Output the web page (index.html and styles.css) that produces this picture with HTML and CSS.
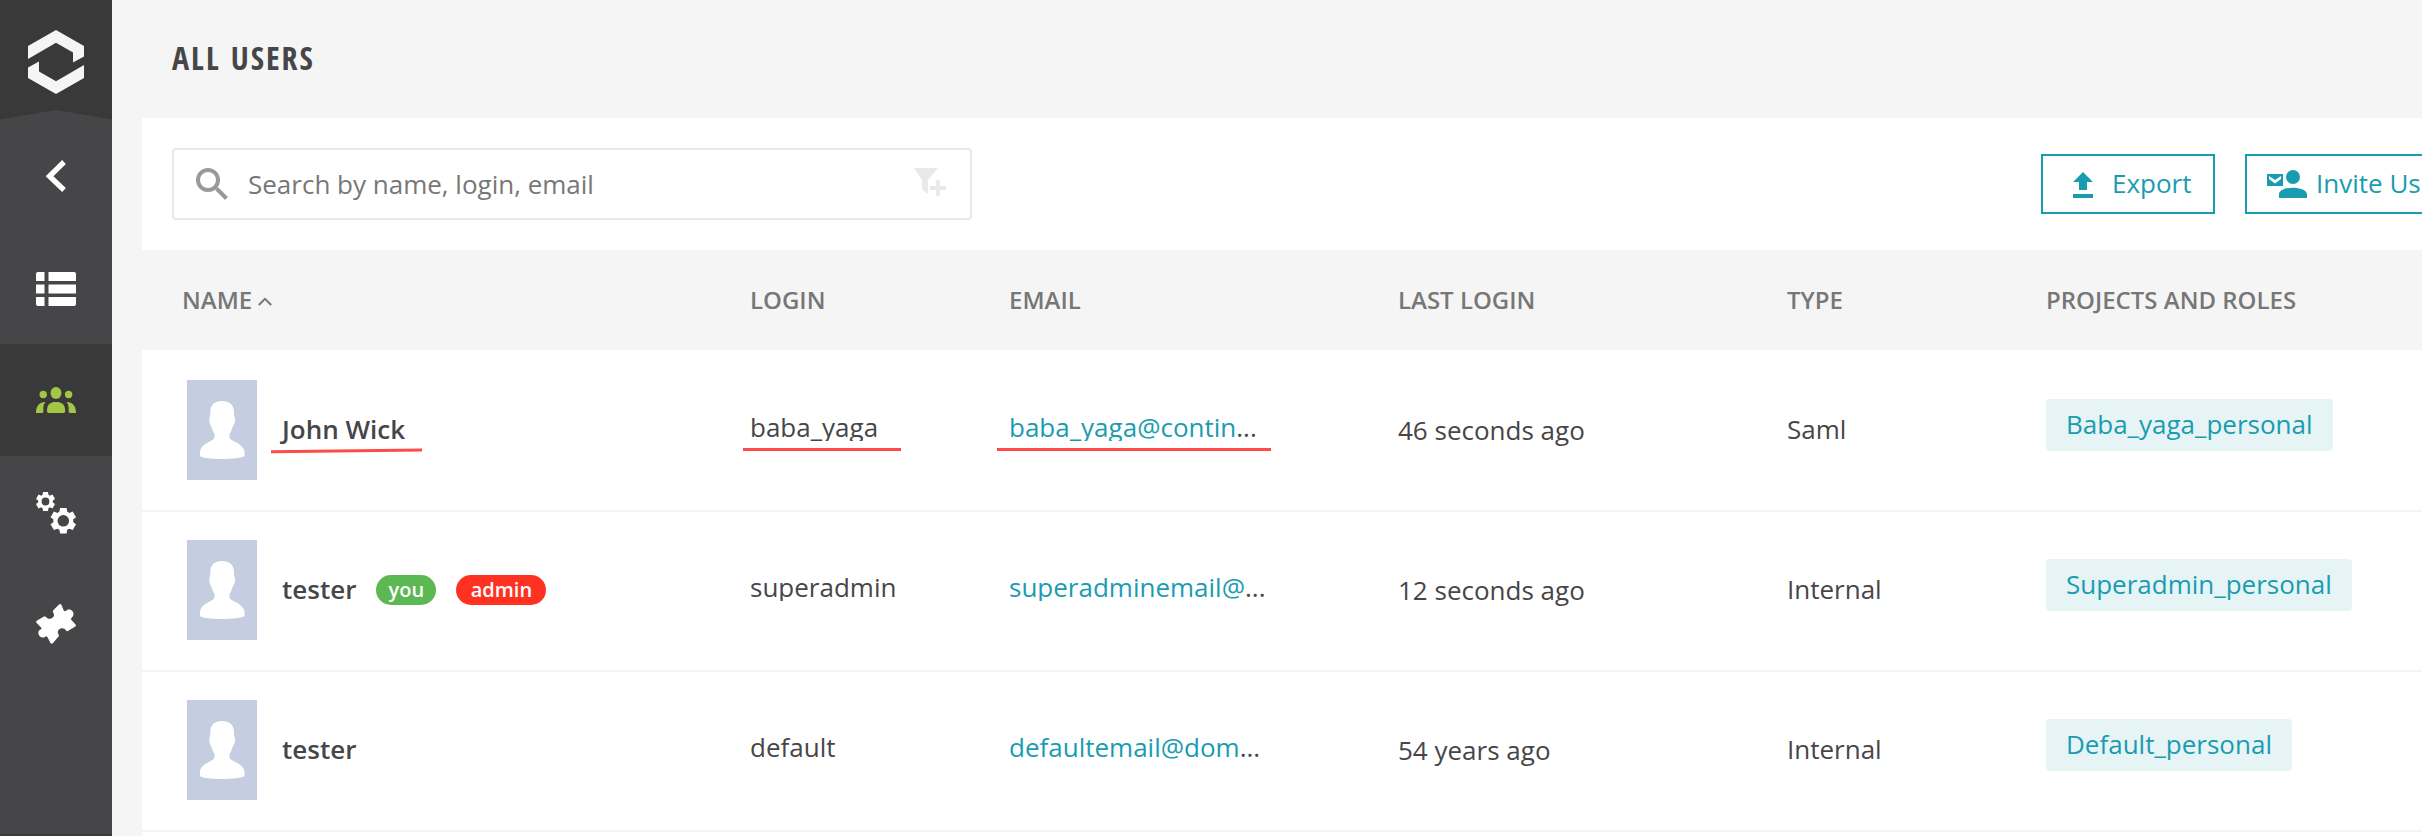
FILE: index.html
```html
<!DOCTYPE html>
<html lang="en">
<head>
<meta charset="utf-8">
<title>All Users</title>
<link rel="stylesheet" href="styles.css">
</head>
<body>
<svg class="defs" width="0" height="0">
  <symbol id="avatar" viewBox="0 0 70 100">
    <path fill="#fff" d="M35 21C43 21 47 25 47 33V36Q48.500 37 48 41Q47.500 45 46 46Q44.500 51 42.500 54V58C45 62 55 62.500 57.500 71V76C54 80 16 80 13 76V71C15 62.500 25.500 62 27.500 58V54Q25.500 51 24 46Q22.500 45 22.300 41Q22 37 23.200 36V33C23.200 25 27 21 35 21Z"/>
  </symbol>
</svg>
<div class="app">
  <nav class="sidebar">
    <div class="logo">
      <svg width="112" height="120" viewBox="0 0 112 120">
        <path fill="#464648" d="M0 119.500L56 110L112 119.500V120H0Z"/>
        <path fill="#f5f5f5" d="M56 30L84 46V56.500L73 62.500V52.500L56 42.700L28 59V46ZM56 94L28 78V67.500L39 61.500V71.500L56 81.300L84 65V78Z"/>
      </svg>
    </div>
    <a class="item item-first"><svg width="112" height="112" viewBox="0 0 112 112"><path fill="none" stroke="#fff" stroke-width="5.300" d="M64 42L49.500 56.300L64 70"/></svg></a>
    <a class="item"><svg width="112" height="112" viewBox="0 0 112 112"><path fill="#fff" d="M38 40H44.500V49H36V42Q36 40 38 40ZM48.500 40H74Q76 40 76 42V49H48.500ZM36 52.500H44.500V61.500H36ZM48.500 52.500H76V61.500H48.500ZM36 65H44.500V74H38Q36 74 36 72ZM48.500 65H76V72Q76 74 74 74H48.500Z"/></svg></a>
    <a class="item active"><svg width="112" height="112" viewBox="0 0 112 112"><g fill="#a3c644"><ellipse cx="56" cy="49" rx="5.500" ry="6"/><circle cx="43.200" cy="50.500" r="3.700"/><circle cx="68.600" cy="50.500" r="3.700"/><path d="M47 67C47 60.500 50 58 56 58S65.200 60.500 65.200 67Q65.200 69 63.500 69H48.500Q47 69 47 67ZM45.500 58C39 58 36 62 36 69H42Q43.400 69 43.400 67.500C43.200 62 43.500 60.500 45.500 58ZM66.500 58C73 58 76 62 76 69H70Q68.700 69 68.700 67.500C68.700 62 68.500 60.500 66.500 58Z"/></g></svg></a>
    <a class="item"><svg width="112" height="112" viewBox="0 0 112 112">
      <g fill="none" stroke="#fff"><circle cx="45.500" cy="45.500" r="5.600" stroke-width="3.400"/><circle cx="63.300" cy="64.800" r="7.900" stroke-width="4.200"/></g>
      <g fill="#fff"><path id="tooth-s" d="M43 36H48L48.500 39.500H42.500Z"/>
      <use href="#tooth-s" transform="rotate(60 45.500 45.500)"/><use href="#tooth-s" transform="rotate(120 45.500 45.500)"/><use href="#tooth-s" transform="rotate(180 45.500 45.500)"/><use href="#tooth-s" transform="rotate(240 45.500 45.500)"/><use href="#tooth-s" transform="rotate(300 45.500 45.500)"/>
      <path id="tooth-l" d="M60 52H66.600L67.300 57H59.300Z"/>
      <use href="#tooth-l" transform="rotate(60 63.300 64.800)"/><use href="#tooth-l" transform="rotate(120 63.300 64.800)"/><use href="#tooth-l" transform="rotate(180 63.300 64.800)"/><use href="#tooth-l" transform="rotate(240 63.300 64.800)"/><use href="#tooth-l" transform="rotate(300 63.300 64.800)"/></g></svg></a>
    <a class="item"><svg width="112" height="112" viewBox="0 0 112 112"><path fill="#fff" d="M59 36.500Q60.500 35.400 61.500 37L63.500 42Q64.800 44 66 42.800C68 40 73.500 41.500 73.500 46C73.500 49 70.500 50 71 51.500L76 57Q76 58.500 74.500 59L67.500 63.300Q66.500 63.500 66 62.500C64 58.800 57.500 60 57.800 65Q59 67 59 68L53 75Q51.500 76.500 50.500 75L47.500 69.300Q46.500 67.500 45 69C41.500 71 37.500 67.500 38.500 63.500C39.200 61.500 42 61.500 41.500 60L36.200 54.500Q35.600 53 37.500 52.300L44 48.500Q46 48 46.500 49.500C48.500 52 54.500 50.500 54 46.500L52.800 43.500Q53 42.500 54 41.500Z"/></svg></a>
  </nav>
  <main class="page">
    <header class="page-header"><h1>ALL USERS</h1></header>
    <section class="toolbar">
      <div class="search">
        <svg class="search-icon" width="32" height="32" viewBox="0 0 32 32"><g fill="none" stroke="#999"><circle cx="12" cy="12" r="10" stroke-width="4"/><path stroke-width="4" d="M20.500 20.500L30.500 30.500"/></g></svg>
        <span class="placeholder">Search by name, login, email</span>
        <svg class="filter-icon" width="32" height="28" viewBox="0 0 32 28"><path fill="#e9e9e9" d="M0 0H24L14 12V26L8 21.500V12ZM22 12H26V18H32V22H26V28H22V22H16V18H22Z"/></svg>
      </div>
      <div class="actions">
        <button class="btn export"><svg class="export-icon" width="20" height="26" viewBox="0 0 20 26"><path fill="#1a9cb0" d="M10 0L20 10H14V18H6V10H0ZM0 22H20V26H0Z"/></svg><span>Export</span></button>
        <button class="btn invite"><svg width="40" height="28" viewBox="0 0 40 28"><path fill="#1a9cb0" fill-rule="evenodd" d="M0 4H16V16H0ZM2 6V9L8 13.500L14 9V6L8 10ZM12 28V24C13 15.500 39 15.500 40 24V28Z"/><circle cx="26" cy="7" r="7" fill="#1a9cb0"/></svg><span>Invite User</span></button>
      </div>
    </section>
    <section class="table">
      <div class="row head">
        <div class="cell-name">NAME<svg class="caret" width="14" height="9" viewBox="0 0 14 9"><path fill="none" stroke="#777" stroke-width="2" d="M.8 8L7 1.800L13.200 8"/></svg></div>
        <div>LOGIN</div><div>EMAIL</div><div>LAST LOGIN</div><div>TYPE</div><div>PROJECTS AND ROLES</div>
      </div>
      <div class="row">
        <div class="cell-user"><svg class="avatar"><use href="#avatar"/></svg><span class="user-name marked">John Wick<svg class="mark mark-name" width="151" height="6" viewBox="0 0 151 6"><path stroke="#ff4a4a" stroke-width="3" d="M0 3.800L151 2"/></svg></span></div>
        <div class="marked"><span class="clip">baba_yaga</span><i class="mark mark-login"></i></div>
        <div class="marked"><span class="clip"><a>baba_yaga@contin</a>...</span><i class="mark mark-email"></i></div>
        <div>46 seconds ago</div><div class="type">Saml</div>
        <div class="cell-project"><span class="project">Baba_yaga_personal</span></div>
      </div>
      <div class="row">
        <div class="cell-user"><svg class="avatar"><use href="#avatar"/></svg><span class="user-name">tester</span><span class="badge you">you</span><span class="badge admin">admin</span></div>
        <div><span class="clip">superadmin</span></div>
        <div><span class="clip"><a>superadminemail@</a>...</span></div>
        <div>12 seconds ago</div><div class="type">Internal</div>
        <div class="cell-project"><span class="project">Superadmin_personal</span></div>
      </div>
      <div class="row">
        <div class="cell-user"><svg class="avatar"><use href="#avatar"/></svg><span class="user-name">tester</span></div>
        <div><span class="clip">default</span></div>
        <div><span class="clip"><a>defaultemail@dom</a>...</span></div>
        <div>54 years ago</div><div class="type">Internal</div>
        <div class="cell-project"><span class="project">Default_personal</span></div>
      </div>
      <div class="row"></div>
    </section>
  </main>
</div>
</body>
</html>
```

FILE: styles.css
```css
* { box-sizing: border-box; }
html, body { margin: 0; height: 836px; overflow: hidden; }
body { background: #f5f5f5; font: 26px/36px "Open Sans", sans-serif; color: #464648; }
.defs { display: block; width: 0; height: 0; }
svg { display: block; flex: none; }
.app { display: flex; height: 836px; overflow: hidden; }

.sidebar { width: 112px; flex: none; background: #464648; border-bottom: 2px solid #3a3a3a; }
.logo { height: 120px; background: #393939; }
.item { display: block; height: 112px; }
.active { background: #393939; }

.page { flex: 1; min-width: 0; padding-left: 30px; }
.page-header { height: 118px; padding: 0 30px 2px; display: flex; align-items: center; }
h1 { margin: 0; font-family: "Open Sans Condensed", "Open Sans", sans-serif; font-size: 32px; font-weight: 700; font-stretch: 75%; letter-spacing: 2px; line-height: 40px; }

.toolbar { height: 132px; background: #fff; padding: 0 30px; display: flex; align-items: center; justify-content: space-between; }
.search { width: 800px; height: 72px; border: 2px solid #e9e9e9; border-radius: 4px; display: flex; align-items: center; padding: 0 24px 0 22px; color: #777; }
.placeholder { flex: 1; padding-left: 20px; }
.filter-icon { margin-top: -4px; }
.actions { display: flex; gap: 30px; margin-right: -93px; }
.btn { height: 60px; flex: none; border: 2px solid #1a9cb0; background: #fff; color: #1a9cb0; font: inherit; display: flex; align-items: center; padding: 0 20px; white-space: nowrap; }
.btn span { margin-bottom: 2px; }
.export { width: 174px; padding-left: 30px; gap: 19px; }
.export-icon { margin-top: 2px; }
.invite { width: 240px; gap: 9px; }

.row { height: 160px; padding-bottom: 2px; background: #fff; border-top: 2px solid #f5f5f5; display: grid; grid-template-columns: 608px 259px 389px 389px 259px 1fr; align-items: center; white-space: nowrap; }
.head { height: 100px; padding: 0; background: #f5f5f5; border: 0; color: #777; font-size: 24px; font-weight: 600; }
.head + .row { border-color: #fff; }
.cell-name { display: flex; align-items: center; gap: 6px; padding-left: 40px; }
.caret { margin-top: 2px; }
.cell-user { display: flex; align-items: center; padding-left: 45px; }
.avatar { width: 70px; height: 100px; background: #c5cde0; }
.user-name { margin: 0 0 2px 25px; font-weight: 600; }
.badge { width: 60px; height: 30px; border-radius: 15px; margin-left: 20px; color: #fff; font-size: 20px; font-weight: 600; line-height: 30px; text-align: center; }
.you { background: #5cb853; }
.admin { width: 90px; background: #ff3222; }
.marked { position: relative; }
.mark { position: absolute; height: 3px; background: #ff4a4a; }
.mark-name { left: -11px; top: 37px; height: 6px; background: none; }
.mark-login { left: -7px; top: 35px; width: 158px; }
.mark-email { left: -12px; top: 35px; width: 274px; }
.clip { display: block; height: 28px; line-height: 28px; margin-bottom: 6px; overflow: hidden; }
.type { padding-bottom: 2px; }
a, .project { color: #1a9cb0; }
.cell-project { display: flex; padding-bottom: 10px; }
.project { height: 52px; line-height: 50px; padding: 0 20px; border-radius: 4px; background: #e6f4f6; }
```
